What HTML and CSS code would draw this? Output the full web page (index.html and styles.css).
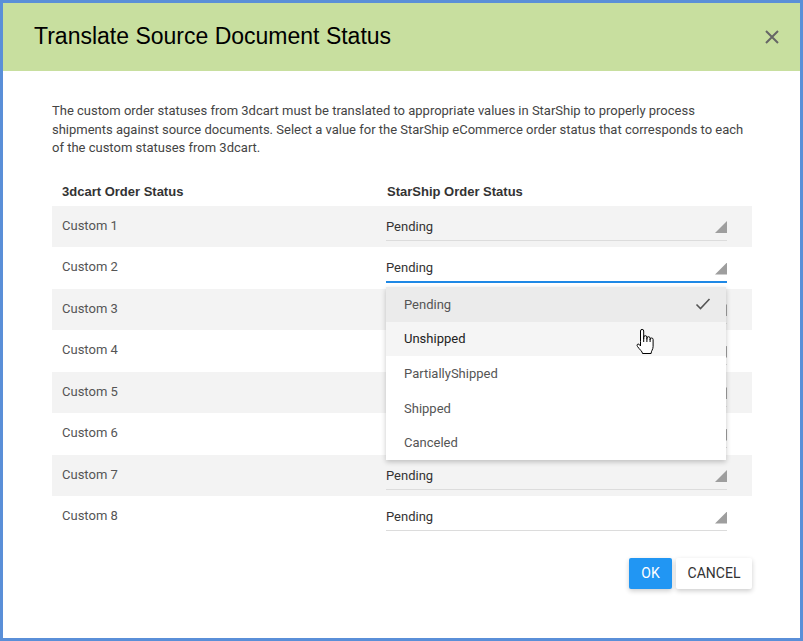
FILE: index.html
```html
<!DOCTYPE html>
<html>
<head>
<meta charset="utf-8">
<link rel="stylesheet" href="styles.css">
</head>
<body>
<div class="dialog">
  <div class="header">
    <h1 class="title">Translate Source Document Status</h1>
    <svg class="close" width="14" height="14" viewBox="0 0 14 14"><path d="M1 1 L13 13 M13 1 L1 13" stroke="#666" stroke-width="2" fill="none"/></svg>
  </div>
  <div class="body">
    <p class="desc">The custom order statuses from 3dcart must be translated to appropriate values in StarShip to properly process shipments against source documents. Select a value for the StarShip eCommerce order status that corresponds to each of the custom statuses from 3dcart.</p>
    <div class="table">
      <div class="thead">
        <div class="th">3dcart Order Status</div>
        <div class="th">StarShip Order Status</div>
      </div>
      <div class="row alt"><div class="name">Custom 1</div><div class="cell"><div class="select"><span>Pending</span><i class="tri"></i></div></div></div>
      <div class="row"><div class="name">Custom 2</div><div class="cell open-cell"><div class="select focus"><span>Pending</span><i class="tri"></i></div>
        <div class="menu">
          <div class="opt sel">Pending<svg class="check" width="16" height="14" viewBox="0 0 16 14"><path d="M1.5 7.5 L5.5 11.5 L14.5 2" stroke="#555" stroke-width="1.6" fill="none"/></svg></div>
          <div class="opt hover">Unshipped</div>
          <div class="opt">PartiallyShipped</div>
          <div class="opt">Shipped</div>
          <div class="opt">Canceled</div>
          <svg class="cursor" width="19" height="27" viewBox="0 0 19 27"><path d="M5.5 13.5 V3 a1.6 1.6 0 0 1 3.2 0 V11 V9.3 a1.6 1.6 0 0 1 3.2 0 V11.5 V10.3 a1.6 1.6 0 0 1 3.2 0 V12 V11.5 a1.5 1.5 0 0 1 3 0 V18.5 c0 3 -2 4.5 -2 7 H7.5 c0 -2 -3 -4 -5 -7 c-1.2 -1.6 0.2 -3.2 1.7 -2.1 L5.5 18 Z M8.7 11 V14 M11.9 11.5 V14 M15.1 12 V14" stroke="#000" stroke-width="1" fill="#fff" stroke-linejoin="round"/></svg>
        </div>
      </div></div>
      <div class="row alt"><div class="name">Custom 3</div><div class="cell"><div class="select"><span>Pending</span><i class="tri"></i></div></div></div>
      <div class="row"><div class="name">Custom 4</div><div class="cell"><div class="select"><span>Pending</span><i class="tri"></i></div></div></div>
      <div class="row alt"><div class="name">Custom 5</div><div class="cell"><div class="select"><span>Pending</span><i class="tri"></i></div></div></div>
      <div class="row"><div class="name">Custom 6</div><div class="cell"><div class="select"><span>Pending</span><i class="tri"></i></div></div></div>
      <div class="row alt"><div class="name">Custom 7</div><div class="cell"><div class="select"><span>Pending</span><i class="tri"></i></div></div></div>
      <div class="row"><div class="name">Custom 8</div><div class="cell"><div class="select"><span>Pending</span><i class="tri"></i></div></div></div>
    </div>
    <div class="actions">
      <button class="btn ok">OK</button>
      <button class="btn cancel">CANCEL</button>
    </div>
  </div>
</div>
</body>
</html>
```
FILE: styles.css
```css
* { box-sizing: border-box; }
html, body { margin: 0; padding: 0; background: #fff; }
body { font-family: Roboto, "Liberation Sans", Arial, sans-serif; }
.dialog {
  width: 803px;
  height: 641px;
  border: 3px solid #5a8fd8;
  background: #fff;
  display: flex;
  flex-direction: column;
}
.header {
  height: 68px;
  background: #c8df9f;
  display: flex;
  align-items: center;
  justify-content: space-between;
  padding: 0 21px 0 31px;
}
.title {
  margin: 0;
  font-family: "Liberation Sans", Arial, sans-serif;
  font-weight: normal;
  font-size: 23px;
  color: #000;
  padding-bottom: 2px;
}
.close { display: block; margin-bottom: 1px; }
.body {
  padding: 31px 48px 0 49px;
}
.desc {
  margin: 0;
  font-size: 13px;
  line-height: 18.5px;
  color: #444;
}
.table { margin-top: 21px; }
.thead {
  display: grid;
  grid-template-columns: 334px 1fr;
  height: 27px;
  align-items: center;
  padding-bottom: 1px;
}
.th {
  font-family: "Liberation Sans", Arial, sans-serif;
  font-size: 13px;
  font-weight: bold;
  color: #333;
  padding-left: 10px;
}
.th + .th { padding-left: 1px; }
.row {
  display: grid;
  grid-template-columns: 334px 1fr;
  height: 41.5px;
  align-items: start;
}
.row.alt { background: #f3f3f3; }
.name {
  font-size: 13px;
  color: #555;
  padding: 12px 0 0 10px;
}
.cell { padding-top: 8px; position: relative; }
.select {
  width: 341px;
  height: 27px;
  border-bottom: 1px solid #dcdcdc;
  display: flex;
  align-items: center;
  justify-content: space-between;
  font-size: 13px;
  color: #333;
  padding-bottom: 1px;
}
.select.focus { border-bottom: 2px solid #1e88e5; height: 28px; }
.tri {
  width: 12px;
  height: 12px;
  background: #9e9e9e;
  clip-path: polygon(100% 0, 100% 100%, 0 100%);
  margin-top: 2px;
}
.menu {
  position: absolute;
  left: 0;
  top: 40px;
  width: 340px;
  background: #fff;
  box-shadow: 0 2px 5px rgba(0,0,0,0.22);
  z-index: 5;
}
.opt {
  height: 34.6px;
  display: flex;
  align-items: center;
  justify-content: space-between;
  padding: 0 15px 0 18px;
  font-size: 13px;
  color: #555;
}
.opt.sel { background: #ebebeb; }
.opt.hover { background: #f5f5f5; color: #222; }
.check { display: block; }
.cursor {
  position: absolute;
  left: 249px;
  top: 41px;
}
.actions {
  display: flex;
  justify-content: flex-end;
  gap: 4px;
  margin-top: 20px;
}
.btn {
  height: 31px;
  border: none;
  border-radius: 2px;
  font-family: Roboto, "Liberation Sans", Arial, sans-serif;
  font-size: 14px;
  padding: 0;
  box-shadow: 0 2px 5px rgba(0,0,0,0.2);
}
.ok { width: 43px; background: #2196f3; color: #fff; }
.cancel { width: 76px; background: #fff; color: #333; }
```
